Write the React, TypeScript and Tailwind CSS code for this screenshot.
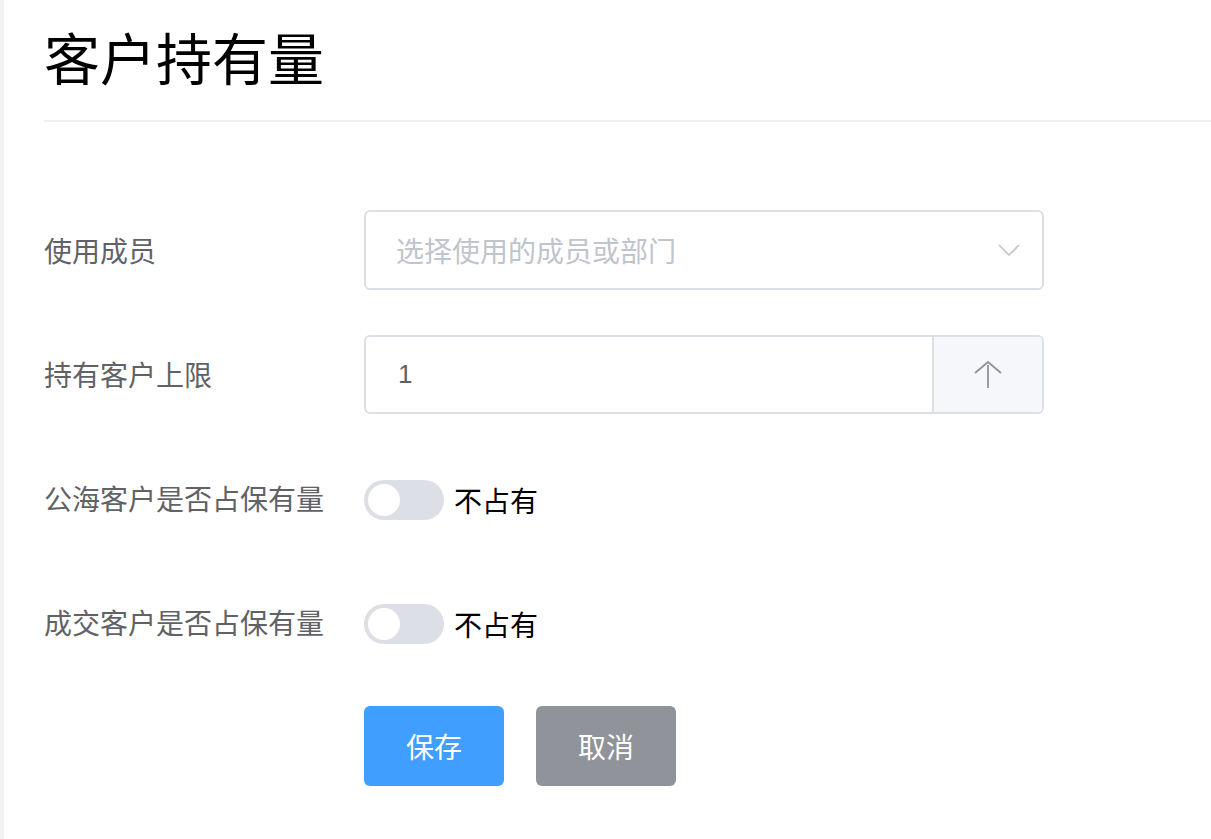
const font = { fontFamily: '"Noto Sans CJK SC", "Liberation Sans", sans-serif' };

function Switch() {
  return (
    <div className="mt-1 flex items-center">
      <div className="relative h-10 w-20 rounded-full bg-[#dcdfe6]">
        <div className="absolute left-1 top-1 h-8 w-8 rounded-full bg-white" />
      </div>
      <span className="ml-[10px] text-[28px] text-[#000]">不占有</span>
    </div>
  );
}

function Row({ label, children }: { label?: string; children: React.ReactNode }) {
  return (
    <div className="flex h-20 items-center">
      <div className="w-[320px] shrink-0 text-[28px] text-[#606266]">{label}</div>
      {children}
    </div>
  );
}

export default function App() {
  return (
    <div className="flex min-h-[839px] bg-white" style={font}>
      <div className="w-1 shrink-0 bg-[#f2f2f2]" />
      <div className="flex-1 pl-10">
        <h1 className="flex h-[120px] items-center pb-2 text-[56px] leading-none text-[#000]">客户持有量</h1>
        <div className="h-[2px] bg-[#f0f0f0]" />
        <div className="mt-[88px] flex flex-col gap-[44px]">
          <Row label="使用成员">
            <div className="flex h-20 w-[680px] items-center justify-between rounded-md border-2 border-[#dcdfe6] pl-[30px] pr-[22px]">
              <span className="text-[28px] text-[#c0c4cc]">选择使用的成员或部门</span>
              <svg width="22" height="12" viewBox="0 0 22 12" fill="none">
                <path d="M1 1l10 10L21 1" stroke="#c0c4cc" strokeWidth="1.6" />
              </svg>
            </div>
          </Row>
          <Row label="持有客户上限">
            <div className="flex h-[79px] w-[680px] overflow-hidden rounded-md border-2 border-[#dcdfe6]">
              <div className="flex flex-1 items-center pl-8 font-['Liberation_Sans'] text-[26px] text-[#606266]">1</div>
              <div className="flex w-[110px] items-center justify-center border-l-2 border-[#dcdfe6] bg-[#f5f7fa]">
                <svg width="30" height="30" viewBox="0 0 30 30" fill="none">
                  <path d="M2 14L15 3l13 11M15 6v23" stroke="#909399" strokeWidth="1.8" />
                </svg>
              </div>
            </div>
          </Row>
          <Row label="公海客户是否占保有量">
            <Switch />
          </Row>
          <Row label="成交客户是否占保有量">
            <Switch />
          </Row>
          <Row>
            <div className="flex gap-8">
              <button className="flex h-20 w-[140px] items-center justify-center rounded-md bg-[#409eff] text-[28px] text-white">保存</button>
              <button className="flex h-20 w-[140px] items-center justify-center rounded-md bg-[#909399] text-[28px] text-white">取消</button>
            </div>
          </Row>
        </div>
      </div>
    </div>
  );
}
